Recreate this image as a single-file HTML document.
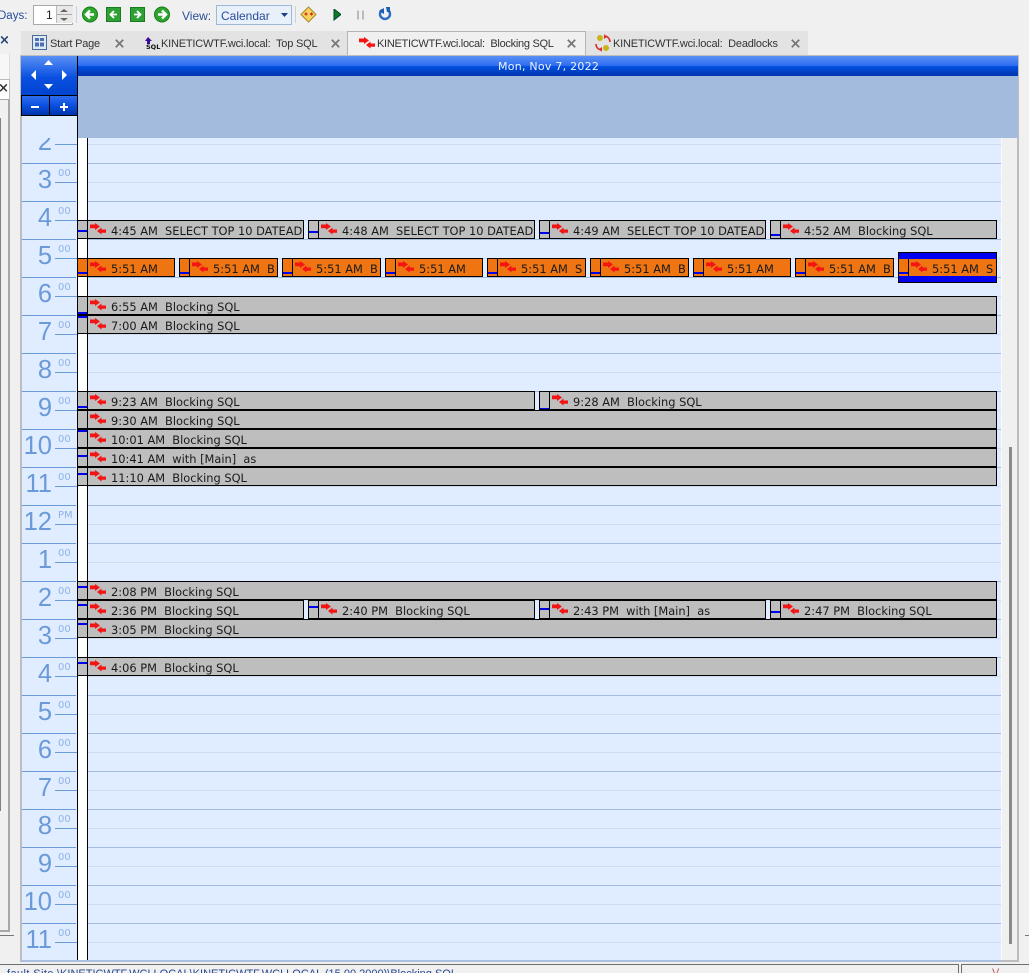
<!DOCTYPE html>
<html><head><meta charset="utf-8"><style>
html,body{margin:0;padding:0;overflow:hidden;height:973px}
body{width:1029px;background:#f0f0f0;position:relative;font-family:"Liberation Sans",sans-serif}
div,span,svg{position:absolute}
.h{left:88px;width:913px;height:1px;background:#a3bce0}
.q{left:88px;width:913px;height:1px;background:#cfdcf0}
.lh{left:22px;width:54px;height:1px;background:#6a9ad8}
.lq{left:55px;width:22px;height:1px;background:#6a9ad8}
.n{width:30px;left:0;text-align:right;font-size:25.5px;line-height:26px;color:#6a9ad8;font-family:"Liberation Sans",sans-serif}
.m{left:36px;margin-top:1px;font-size:10px;line-height:12px;color:#8fb4e6;font-family:"DejaVu Sans",sans-serif}
.e{height:17px;border:1px solid #000;background:#bebebe;box-sizing:content-box;overflow:hidden}
.o{background:#ee7511}
.s{left:0;top:0;width:9px;height:17px;border-right:1px solid #000}
.b{left:0;width:9px;height:2px;background:#0000f0}
.a{left:12px;top:2px;width:17px;height:12px}
.t{left:33px;top:2px;font:11.4px/17px "DejaVu Sans",sans-serif;color:#1a1a1a;white-space:pre}
.tab{top:37px;font-size:11px;letter-spacing:-.2px;line-height:14px;color:#333;white-space:pre}
.x{top:39px;width:9px;height:9px}
</style></head><body>
<svg width="0" height="0" style="left:0;top:0"><defs>
<g id="ar"><path fill="#f41414" d="M0 1.500h5V0l5 3.500L5 7V5.200H0z"/><path fill="#f41414" d="M16 6.500h-4.500V4.500L7 8l4.500 3.500V9.700H16z"/></g>
<path id="cl" d="M.8.800l7.400 7.400M8.200.800L.8 8.200" stroke="#777" stroke-width="1.800" fill="none"/>
</defs></svg>

<!-- toolbar -->
<span style="left:-2px;top:9px;font-size:11.5px;line-height:14px;color:#2a4d9a">Days:</span>
<div style="left:33px;top:5px;width:38px;height:18px;border:1px solid #a8a8a8;background:#fff"></div>
<span style="left:46px;top:8px;font-size:12px;line-height:14px;color:#222">1</span>
<div style="left:56px;top:6px;width:16px;height:17px;background:#e8e8e8;border-left:1px solid #bbb"></div>
<svg style="left:57px;top:7px" width="15" height="16"><path fill="#666" d="M3 5l4-3 4 3z M3 11l4 3 4-3z"/><path stroke="#aaa" d="M0 7.500h15"/></svg>
<div style="left:76px;top:6px;width:1px;height:17px;background:#c6d3e3"></div>
<svg style="left:81px;top:6px" width="18" height="17"><circle cx="9" cy="8.500" r="7.500" fill="#2fa52f" stroke="#157a15"/><path d="M13 8.500H6M9 4.500l-4 4 4 4" stroke="#fff" stroke-width="2.400" fill="none"/></svg>
<svg style="left:106px;top:7px" width="16" height="16"><rect x=".5" y=".5" width="14" height="14" fill="#2fa035" stroke="#197a20"/><path d="M11 7.500H5M8 4L4.500 7.500 8 11" stroke="#fff" stroke-width="1.800" fill="none"/></svg>
<svg style="left:130px;top:7px" width="16" height="16"><rect x=".5" y=".5" width="14" height="14" fill="#2fa035" stroke="#197a20"/><path d="M4 7.500h6M7 4l3.500 3.500L7 11" stroke="#fff" stroke-width="1.800" fill="none"/></svg>
<svg style="left:153px;top:6px" width="18" height="17"><circle cx="9" cy="8.500" r="7.500" fill="#2fa52f" stroke="#157a15"/><path d="M5 8.500h7M9 4.500l4 4-4 4" stroke="#fff" stroke-width="2.400" fill="none"/></svg>
<span style="left:182px;top:9px;font-size:12px;line-height:14px;color:#2a4d9a">View:</span>
<div style="left:216px;top:5px;width:74px;height:18px;border:1px solid #9db8d8;background:#e8f0fa"></div>
<span style="left:221px;top:9px;font-size:12px;line-height:14px;color:#2a4d9a">Calendar</span>
<svg style="left:281px;top:13px" width="7" height="4"><path d="M0 0h7L3.500 4z" fill="#1a3f8a"/></svg>
<div style="left:295px;top:6px;width:1px;height:17px;background:#c6d3e3"></div>
<svg style="left:300px;top:6px" width="17" height="17"><path d="M8.500 1L16 8.500 8.500 16 1 8.500z" fill="#f7d35a" stroke="#a8862a" stroke-linejoin="round"/><path d="M4.500 8h3M6 6.500v3M10 8h3M11.500 6.500v3" stroke="#d02020" stroke-width="1.200"/></svg>
<svg style="left:333px;top:9px" width="8" height="12"><path d="M1 0l7 5.500L1 11z" fill="#0c7a20" stroke="#043"/></svg>
<svg style="left:357px;top:10px" width="8" height="10"><path d="M1 .5v9M6 .5v9" stroke="#bbb" stroke-width="2"/></svg>
<svg style="left:378px;top:7px" width="14" height="15"><path d="M4 3a5 5 0 1 0 6 0" fill="none" stroke="#2b6fc4" stroke-width="2.400"/><path d="M6 1v6l-5-3z M8 0h4v5H9z" fill="#1d5fb5"/></svg>

<!-- left panel -->
<span style="left:-1px;top:34px;font:bold 13px/14px 'DejaVu Sans',sans-serif;color:#1a4070">×</span>
<div style="left:0;top:54px;width:9px;height:25px;background:#f7f7f7;border-right:1px solid #ddd"></div>
<div style="left:0;top:79px;width:9px;height:19px;background:#fff;border:1px solid #bbb;border-left:0"></div>
<span style="left:-2px;top:82px;font:bold 13px/14px 'DejaVu Sans',sans-serif;color:#333">×</span>
<div style="left:0;top:99px;width:8px;height:830px;border-right:2px solid #a8a8a8;border-bottom:2px solid #a8a8a8;border-top:1px solid #a8a8a8"></div>
<div style="left:0;top:118px;width:1px;height:693px;background:#808080"></div>
<div style="left:0;top:935px;width:14px;height:1px;background:#777"></div>
<div style="left:1025px;top:935px;width:4px;height:1px;background:#777"></div>

<!-- tabs -->
<div style="left:21px;top:31px;width:787px;height:24px;background:#e3e3e3"></div>
<div style="left:347px;top:31px;width:237px;height:24px;background:#f0f0f0;border:1px solid #b4b4b4;border-bottom:0"></div>
<svg style="left:32px;top:35px" width="16" height="15"><rect x=".5" y=".5" width="14" height="14" fill="#dfe8f5" stroke="#4a6a9a"/><path fill="#4a6fb5" d="M3 3h4v3H3zM8 3h4v3H8zM3 7.500h4v4H3zM8 7.500h4v4H8z"/></svg>
<span class="tab" style="left:50px">Start Page</span>
<svg class="x" style="left:115px"><use href="#cl"/></svg>
<svg style="left:144px;top:37px" width="15" height="13"><path fill="#3a0a9a" d="M4 0l4 4H6v3H3V4H1z"/></svg>
<span style="left:146px;top:44px;font:bold 6.500px/7px 'DejaVu Sans',sans-serif;color:#111">SQL</span>
<span class="tab" style="left:161px">KINETICWTF.wci.local:  Top SQL</span>
<svg class="x" style="left:331px"><use href="#cl"/></svg>
<svg style="left:359px;top:37px" width="17" height="12"><use href="#ar"/></svg>
<span class="tab" style="left:377px;letter-spacing:-.28px">KINETICWTF.wci.local:  Blocking SQL</span>
<svg class="x" style="left:567px"><use href="#cl"/></svg>
<svg style="left:594px;top:34px" width="18" height="18"><circle cx="6" cy="4" r="3" fill="#c8b414"/><circle cx="12" cy="14" r="3" fill="#c8b414"/><path d="M11 2a6 6 0 0 1 5 6M7 16a6 6 0 0 1-5-6" stroke="#d83030" stroke-width="1.600" fill="none"/><path fill="#d83030" d="M10 0l3 3-3 2zM8 18l-3-3 3-2z"/></svg>
<span class="tab" style="left:613px">KINETICWTF.wci.local:  Deadlocks</span>
<svg class="x" style="left:791px"><use href="#cl"/></svg>

<!-- calendar frame -->
<div style="left:20px;top:55px;width:999px;height:907px;box-sizing:border-box;border:2px solid #bdbdbd;border-bottom:0;background:#f0f0f0"></div>
<div style="left:1001px;top:960px;width:18px;height:2px;background:#bdbdbd"></div>
<div style="left:22px;top:115px;width:55px;height:845px;background:#e0ecff"></div>
<div style="left:78px;top:76px;width:940px;height:62px;background:#a3bcde"></div>
<div style="left:88px;top:138px;width:913px;height:822px;background:#e0ecff"></div>
<div style="left:78px;top:138px;width:9px;height:822px;background:#fff"></div>
<div style="left:77px;top:56px;width:1px;height:904px;background:#000"></div>
<div style="left:87px;top:138px;width:1px;height:822px;background:#000"></div>
<div style="left:1001px;top:138px;width:1px;height:822px;background:#fafafa"></div>
<div style="left:22px;top:960px;width:979px;height:2px;background:#a8c0e0"></div>
<div style="left:1009px;top:447px;width:3px;height:497px;background:#8a8a8a"></div>
<!-- header -->
<div style="left:78px;top:56px;width:940px;height:20px;background:linear-gradient(#5a90f5 0,#2f6cf0 48%,#0050e0 52%,#0034ad 100%)"></div>
<span style="left:498px;top:60px;font:11px/13px 'DejaVu Sans',sans-serif;color:#f0f4ff;letter-spacing:.25px">Mon, Nov 7, 2022</span>
<!-- nav -->
<div style="left:21px;top:56px;width:56px;height:39px;background:linear-gradient(#5a90f5,#0a50e0 55%,#0044d0)"></div>
<div style="left:21px;top:95px;width:56px;height:1px;background:#000"></div>
<div style="left:21px;top:96px;width:28px;height:19px;background:linear-gradient(#2f6cf0 0,#0a50e0 50%,#0034ad)"></div>
<div style="left:50px;top:96px;width:27px;height:19px;background:linear-gradient(#2f6cf0 0,#0a50e0 50%,#0034ad)"></div>
<div style="left:49px;top:96px;width:1px;height:19px;background:#000"></div>
<div style="left:21px;top:95px;width:1px;height:20px;background:#000"></div>
<div style="left:21px;top:115px;width:56px;height:1px;background:#000"></div>
<svg style="left:21px;top:56px" width="56" height="59"><path fill="#fff" d="M23 9l4.500-5 4.500 5zM23 28l4.500 5 4.500-5zM15 14v10l-5-5zM41 14v10l5-5zM10 50h8v2h-8zM39 50h3v-3h2v3h3v2h-3v3h-2v-3h-3z"/></svg>

<!-- grid lines -->
<div class="q" style="top:144px"></div><div class="h" style="top:163px"></div><div class="q" style="top:182px"></div><div class="h" style="top:201px"></div><div class="q" style="top:220px"></div><div class="h" style="top:239px"></div><div class="q" style="top:258px"></div><div class="h" style="top:277px"></div><div class="q" style="top:296px"></div><div class="h" style="top:315px"></div><div class="q" style="top:334px"></div><div class="h" style="top:353px"></div><div class="q" style="top:372px"></div><div class="h" style="top:391px"></div><div class="q" style="top:410px"></div><div class="h" style="top:429px"></div><div class="q" style="top:448px"></div><div class="h" style="top:467px"></div><div class="q" style="top:486px"></div><div class="h" style="top:505px"></div><div class="q" style="top:524px"></div><div class="h" style="top:543px"></div><div class="q" style="top:562px"></div><div class="h" style="top:581px"></div><div class="q" style="top:600px"></div><div class="h" style="top:619px"></div><div class="q" style="top:638px"></div><div class="h" style="top:657px"></div><div class="q" style="top:676px"></div><div class="h" style="top:695px"></div><div class="q" style="top:714px"></div><div class="h" style="top:733px"></div><div class="q" style="top:752px"></div><div class="h" style="top:771px"></div><div class="q" style="top:790px"></div><div class="h" style="top:809px"></div><div class="q" style="top:828px"></div><div class="h" style="top:847px"></div><div class="q" style="top:866px"></div><div class="h" style="top:885px"></div><div class="q" style="top:904px"></div><div class="h" style="top:923px"></div><div class="q" style="top:942px"></div>

<!-- hour labels -->
<div class="lq" style="top:144px"></div>
<div class="lh" style="top:163px"></div><div class="lq" style="top:182px"></div><div class="lh" style="top:201px"></div><div class="lq" style="top:220px"></div><div class="lh" style="top:239px"></div><div class="lq" style="top:258px"></div><div class="lh" style="top:277px"></div><div class="lq" style="top:296px"></div><div class="lh" style="top:315px"></div><div class="lq" style="top:334px"></div><div class="lh" style="top:353px"></div><div class="lq" style="top:372px"></div><div class="lh" style="top:391px"></div><div class="lq" style="top:410px"></div><div class="lh" style="top:429px"></div><div class="lq" style="top:448px"></div><div class="lh" style="top:467px"></div><div class="lq" style="top:486px"></div><div class="lh" style="top:505px"></div><div class="lq" style="top:524px"></div><div class="lh" style="top:543px"></div><div class="lq" style="top:562px"></div><div class="lh" style="top:581px"></div><div class="lq" style="top:600px"></div><div class="lh" style="top:619px"></div><div class="lq" style="top:638px"></div><div class="lh" style="top:657px"></div><div class="lq" style="top:676px"></div><div class="lh" style="top:695px"></div><div class="lq" style="top:714px"></div><div class="lh" style="top:733px"></div><div class="lq" style="top:752px"></div><div class="lh" style="top:771px"></div><div class="lq" style="top:790px"></div><div class="lh" style="top:809px"></div><div class="lq" style="top:828px"></div><div class="lh" style="top:847px"></div><div class="lq" style="top:866px"></div><div class="lh" style="top:885px"></div><div class="lq" style="top:904px"></div><div class="lh" style="top:923px"></div><div class="lq" style="top:942px"></div>

<div style="left:22px;top:116px;width:55px;height:845px;overflow:hidden;clip-path:inset(22px 0 0 0)">
<div class="n" style="top:13px">2</div><div class="m" style="top:13px">00</div>
<div class="n" style="top:51px">3</div><div class="m" style="top:51px">00</div>
<div class="n" style="top:89px">4</div><div class="m" style="top:89px">00</div>
<div class="n" style="top:127px">5</div><div class="m" style="top:127px">00</div>
<div class="n" style="top:165px">6</div><div class="m" style="top:165px">00</div>
<div class="n" style="top:203px">7</div><div class="m" style="top:203px">00</div>
<div class="n" style="top:241px">8</div><div class="m" style="top:241px">00</div>
<div class="n" style="top:279px">9</div><div class="m" style="top:279px">00</div>
<div class="n" style="top:317px">10</div><div class="m" style="top:317px">00</div>
<div class="n" style="top:355px">11</div><div class="m" style="top:355px">00</div>
<div class="n" style="top:393px">12</div><div class="m" style="top:393px">PM</div>
<div class="n" style="top:431px">1</div><div class="m" style="top:431px">00</div>
<div class="n" style="top:469px">2</div><div class="m" style="top:469px">00</div>
<div class="n" style="top:507px">3</div><div class="m" style="top:507px">00</div>
<div class="n" style="top:545px">4</div><div class="m" style="top:545px">00</div>
<div class="n" style="top:583px">5</div><div class="m" style="top:583px">00</div>
<div class="n" style="top:621px">6</div><div class="m" style="top:621px">00</div>
<div class="n" style="top:659px">7</div><div class="m" style="top:659px">00</div>
<div class="n" style="top:697px">8</div><div class="m" style="top:697px">00</div>
<div class="n" style="top:735px">9</div><div class="m" style="top:735px">00</div>
<div class="n" style="top:773px">10</div><div class="m" style="top:773px">00</div>
<div class="n" style="top:811px">11</div><div class="m" style="top:811px">00</div>
</div>

<!-- events -->
<div class="e" style="left:77px;top:220px;width:225px"><div class="s"></div><div class="b" style="top:9px"></div><svg class="a"><use href="#ar"/></svg><span class="t">4:45 AM  SELECT TOP 10 DATEAD</span></div>
<div class="e" style="left:308px;top:220px;width:225px"><div class="s"></div><div class="b" style="top:10px"></div><svg class="a"><use href="#ar"/></svg><span class="t">4:48 AM  SELECT TOP 10 DATEAD</span></div>
<div class="e" style="left:539px;top:220px;width:225px"><div class="s"></div><div class="b" style="top:11px"></div><svg class="a"><use href="#ar"/></svg><span class="t">4:49 AM  SELECT TOP 10 DATEAD</span></div>
<div class="e" style="left:770px;top:220px;width:225px"><div class="s"></div><div class="b" style="top:13px"></div><svg class="a"><use href="#ar"/></svg><span class="t">4:52 AM  Blocking SQL</span></div>

<div class="e o" style="left:77px;top:258px;width:96px"><div class="s"></div><div class="b" style="top:13px"></div><svg class="a"><use href="#ar"/></svg><span class="t">5:51 AM</span></div>
<div class="e o" style="left:179px;top:258px;width:97px"><div class="s"></div><div class="b" style="top:13px"></div><svg class="a"><use href="#ar"/></svg><span class="t">5:51 AM  B</span></div>
<div class="e o" style="left:282px;top:258px;width:97px"><div class="s"></div><div class="b" style="top:13px"></div><svg class="a"><use href="#ar"/></svg><span class="t">5:51 AM  B</span></div>
<div class="e o" style="left:385px;top:258px;width:96px"><div class="s"></div><div class="b" style="top:13px"></div><svg class="a"><use href="#ar"/></svg><span class="t">5:51 AM</span></div>
<div class="e o" style="left:487px;top:258px;width:97px"><div class="s"></div><div class="b" style="top:13px"></div><svg class="a"><use href="#ar"/></svg><span class="t">5:51 AM  S</span></div>
<div class="e o" style="left:590px;top:258px;width:97px"><div class="s"></div><div class="b" style="top:13px"></div><svg class="a"><use href="#ar"/></svg><span class="t">5:51 AM  B</span></div>
<div class="e o" style="left:693px;top:258px;width:96px"><div class="s"></div><div class="b" style="top:13px"></div><svg class="a"><use href="#ar"/></svg><span class="t">5:51 AM</span></div>
<div class="e o" style="left:795px;top:258px;width:97px"><div class="s"></div><div class="b" style="top:13px"></div><svg class="a"><use href="#ar"/></svg><span class="t">5:51 AM  B</span></div>
<div style="left:898px;top:252px;width:97px;height:29px;border:1px solid #000;background:#0000f0"></div>
<div class="e o" style="left:898px;top:258px;width:97px;border-bottom-color:#0000f0;border-top-color:#0000f0;border-left-color:#000;border-right-color:#000"><div class="s"></div><div class="b" style="top:13px"></div><svg class="a"><use href="#ar"/></svg><span class="t">5:51 AM  S</span></div>

<div class="e" style="left:77px;top:296px;width:918px"><div class="s"></div><div class="b" style="top:15px"></div><svg class="a"><use href="#ar"/></svg><span class="t">6:55 AM  Blocking SQL</span></div>
<div class="e" style="left:77px;top:315px;width:918px"><div class="s"></div><div class="b" style="top:0"></div><svg class="a"><use href="#ar"/></svg><span class="t">7:00 AM  Blocking SQL</span></div>
<div class="e" style="left:77px;top:391px;width:456px"><div class="s"></div><div class="b" style="top:14px"></div><svg class="a"><use href="#ar"/></svg><span class="t">9:23 AM  Blocking SQL</span></div>
<div class="e" style="left:539px;top:391px;width:456px"><div class="s"></div><div class="b" style="top:16px"></div><svg class="a"><use href="#ar"/></svg><span class="t">9:28 AM  Blocking SQL</span></div>
<div class="e" style="left:77px;top:410px;width:918px"><div class="s"></div><svg class="a"><use href="#ar"/></svg><span class="t">9:30 AM  Blocking SQL</span></div>
<div class="e" style="left:77px;top:429px;width:918px"><div class="s"></div><div class="b" style="top:0"></div><svg class="a"><use href="#ar"/></svg><span class="t">10:01 AM  Blocking SQL</span></div>
<div class="e" style="left:77px;top:448px;width:918px"><div class="s"></div><div class="b" style="top:6px"></div><svg class="a"><use href="#ar"/></svg><span class="t">10:41 AM  with [Main]  as</span></div>
<div class="e" style="left:77px;top:467px;width:918px"><div class="s"></div><div class="b" style="top:5px"></div><svg class="a"><use href="#ar"/></svg><span class="t">11:10 AM  Blocking SQL</span></div>
<div class="e" style="left:77px;top:581px;width:918px"><div class="s"></div><div class="b" style="top:4px"></div><svg class="a"><use href="#ar"/></svg><span class="t">2:08 PM  Blocking SQL</span></div>
<div class="e" style="left:77px;top:600px;width:225px"><div class="s"></div><div class="b" style="top:3px"></div><svg class="a"><use href="#ar"/></svg><span class="t">2:36 PM  Blocking SQL</span></div>
<div class="e" style="left:308px;top:600px;width:225px"><div class="s"></div><div class="b" style="top:5px"></div><svg class="a"><use href="#ar"/></svg><span class="t">2:40 PM  Blocking SQL</span></div>
<div class="e" style="left:539px;top:600px;width:225px"><div class="s"></div><div class="b" style="top:7px"></div><svg class="a"><use href="#ar"/></svg><span class="t">2:43 PM  with [Main]  as</span></div>
<div class="e" style="left:770px;top:600px;width:225px"><div class="s"></div><div class="b" style="top:10px"></div><svg class="a"><use href="#ar"/></svg><span class="t">2:47 PM  Blocking SQL</span></div>
<div class="e" style="left:77px;top:619px;width:918px"><div class="s"></div><div class="b" style="top:3px"></div><svg class="a"><use href="#ar"/></svg><span class="t">3:05 PM  Blocking SQL</span></div>
<div class="e" style="left:77px;top:657px;width:918px"><div class="s"></div><div class="b" style="top:4px"></div><svg class="a"><use href="#ar"/></svg><span class="t">4:06 PM  Blocking SQL</span></div>

<!-- status bar -->
<div style="left:0;top:964px;width:959px;height:1px;background:#6e6e6e"></div>
<div style="left:958px;top:964px;width:1px;height:9px;background:#6e6e6e"></div>
<div style="left:961px;top:964px;width:68px;height:1px;background:#6e6e6e"></div>
<div style="left:961px;top:964px;width:1px;height:9px;background:#6e6e6e"></div>
<span style="left:7px;top:967px;font-size:11px;letter-spacing:.4px;line-height:14px;color:#26468f;white-space:pre">fault Site</span>
<span style="left:57px;top:967px;font-size:11px;line-height:14px;color:#26468f;white-space:pre">\KINETICWTF.WCI.LOCAL\KINETICWTF.WCI.LOCAL (15.00.2000)\Blocking SQL</span>
<span style="left:992px;top:967px;font-size:11px;line-height:13px;color:#c05a6a">V</span>
</body></html>
